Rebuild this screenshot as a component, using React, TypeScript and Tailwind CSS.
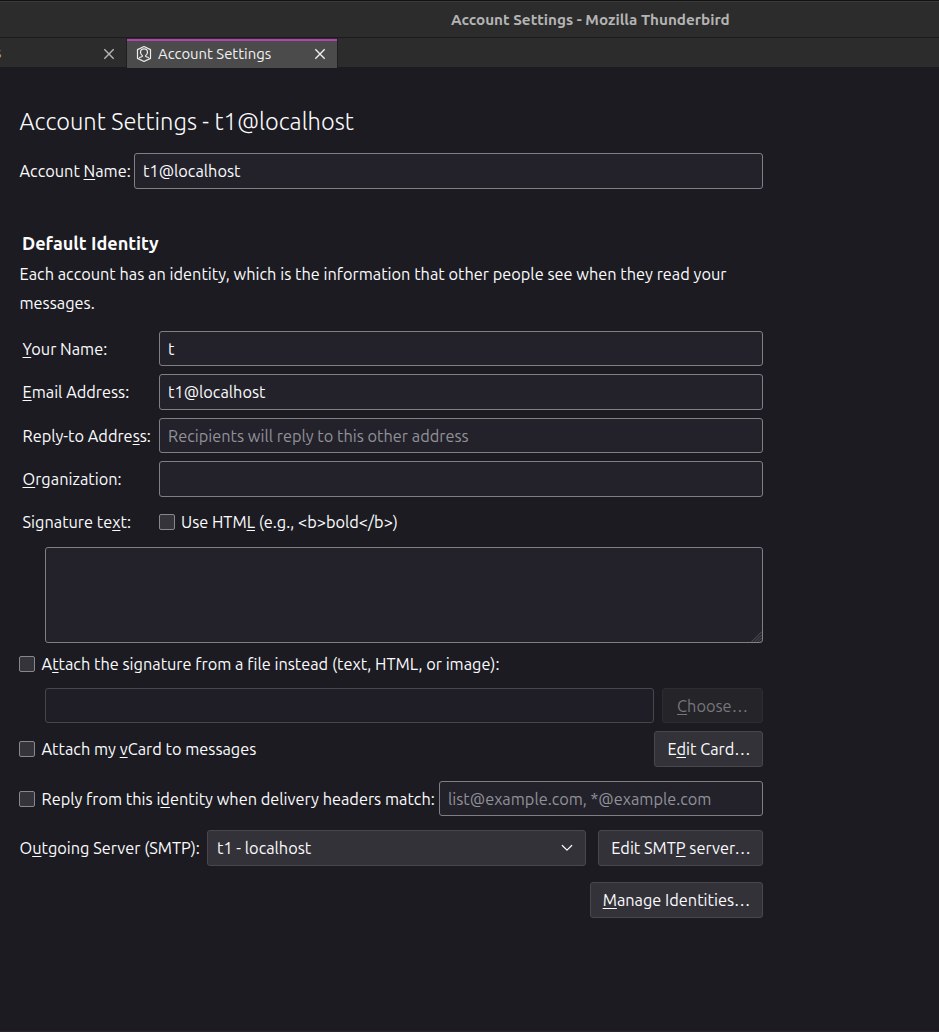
import React from "react";
import clsx from "clsx";

/** Label text with one access key letter underlined. */
function Keyed({ text, at }: { text: string; at: number }) {
  return (
    <>
      {text.slice(0, at)}
      <span className="underline decoration-1 underline-offset-2 [text-decoration-skip-ink:none]">
        {text[at]}
      </span>
      {text.slice(at + 1)}
    </>
  );
}

function Field({
  className,
  value,
  placeholder,
  disabled,
}: {
  className?: string;
  value?: string;
  placeholder?: string;
  disabled?: boolean;
}) {
  return (
    <input
      type="text"
      defaultValue={value}
      placeholder={placeholder}
      disabled={disabled}
      className={clsx(
        "min-w-0 rounded-[3px] border px-2 outline-none placeholder:text-[#919197]",
        disabled ? "border-[#47464c] bg-[#1f1e26]" : "border-[#807f84] bg-[#23222b]",
        className,
      )}
    />
  );
}

function Check() {
  return (
    <input
      type="checkbox"
      className="size-4 shrink-0 appearance-none rounded-[2px] border border-[#88878c] bg-[#35343a]"
    />
  );
}

function Button({
  text,
  at,
  disabled,
  className,
}: {
  text: string;
  at: number;
  disabled?: boolean;
  className: string;
}) {
  return (
    <button
      disabled={disabled}
      className={clsx(
        "flex shrink-0 items-center justify-center rounded-[3px] border",
        disabled ? "border-[#2d2c32] bg-[#252429] text-[#77767b]" : "border-[#48474c] bg-[#333238]",
        className,
      )}
    >
      <span>
        <Keyed text={text} at={at} />
      </span>
    </button>
  );
}

function CloseIcon({ className }: { className: string }) {
  return (
    <svg viewBox="0 0 12 12" className={clsx("size-3 shrink-0", className)} fill="none" stroke="currentColor" strokeWidth="1.4">
      <path d="M1.3 1.3l9.4 9.4M10.7 1.3l-9.4 9.4" />
    </svg>
  );
}

function AccountIcon() {
  return (
    <svg viewBox="0 0 16 18" className="h-[18px] w-4 shrink-0" fill="none" stroke="#ededed" strokeWidth="1.2" strokeLinejoin="round">
      <path d="M8 1.500l6.500 3.100v8.800L8 16.500l-6.500-3.100V4.600z" />
      <path d="M3.500 13.300v-.5c0-1 3-.6 3-1.800 0-.6-.7-.8-1.200-1.500-.5-.7-.8-1.400-.8-2.300 0-2 1.500-3.300 3.500-3.300s3.500 1.300 3.500 3.300c0 .9-.3 1.600-.8 2.300-.5.7-1.200.9-1.200 1.500 0 1.200 3 .8 3 1.800v.5" />
    </svg>
  );
}

export default function App() {
  return (
    <div className="flex h-[1032px] w-[939px] flex-col overflow-hidden border-b border-[#2b2429] bg-[#1c1b21] font-['Ubuntu','Noto_Sans',sans-serif] text-[16.33px] leading-[22px] text-[#fbfbfe]">
      <header className="flex h-[38px] shrink-0 items-center border-t border-b border-t-[#111111] border-b-[#1b1b1b] bg-[#2c2c2c]">
        <div className="flex h-full w-full items-center border-t border-[#3a3a3a] pl-[451px]">
          <span className="text-[15.25px] font-bold text-[#b4b4b4]">Account Settings - Mozilla Thunderbird</span>
        </div>
      </header>

      <nav className="flex h-[29px] shrink-0 bg-[#2c2c2c] text-[14.88px]">
        <div className="flex w-[127px] shrink-0 items-center justify-between border-r border-[#1f1f1f] pr-[11px]">
          <span className="-ml-[5px] text-[#a8a8a8]">s</span>
          <CloseIcon className="mt-0.5 text-[#b5b5b5]" />
        </div>
        <div className="mt-px flex h-[29px] w-[210px] shrink-0 items-center border-t-2 border-[#b343b0] bg-[#4b4b4b] pr-[11px] pb-[2px] pl-[9px]">
          <AccountIcon />
          <span className="ml-[6px] flex-1 text-[#f2f2f2]">Account Settings</span>
          <CloseIcon className="text-[#ececec]" />
        </div>
        <div className="w-px bg-[#1f1f1f]" />
      </nav>

      <main className="flex w-[763px] flex-col">
        <h1 className="mt-[38px] ml-[19.5px] h-8 text-[23.65px] leading-8 font-light whitespace-nowrap">
          Account Settings - t1@localhost
        </h1>

        <div className="mt-4 flex h-9 items-center pl-[19.5px]">
          <span className="w-[114.5px] shrink-0">
            <Keyed text="Account Name:" at={8} />
          </span>
          <Field value="t1@localhost" className="h-9 flex-1" />
        </div>

        <h2 className="mt-[42px] ml-[22px] h-6 text-[18.1px] leading-6 font-bold">Default Identity</h2>
        <p className="mt-[5px] ml-[19.5px] h-[58px] leading-[29px] whitespace-nowrap">
          Each account has an identity, which is the information that other people see when they read your
          <br />
          messages.
        </p>

        <div className="mt-[13px] flex h-[35px] items-center pl-[22.5px]">
          <span className="w-[136.5px] shrink-0">
            <Keyed text="Your Name:" at={0} />
          </span>
          <Field value="t" className="h-[35px] flex-1" />
        </div>
        <div className="mt-2 flex h-9 items-center pl-[22.5px]">
          <span className="w-[136.5px] shrink-0">
            <Keyed text="Email Address:" at={0} />
          </span>
          <Field value="t1@localhost" className="h-9 flex-1" />
        </div>
        <div className="mt-2 flex h-[35px] items-center pl-[22.5px]">
          <span className="w-[136.5px] shrink-0">
            <Keyed text="Reply-to Address:" at={14} />
          </span>
          <Field placeholder="Recipients will reply to this other address" className="h-[35px] flex-1" />
        </div>
        <div className="mt-2 flex h-9 items-center pl-[22.5px]">
          <span className="w-[136.5px] shrink-0">
            <Keyed text="Organization:" at={0} />
          </span>
          <Field className="h-9 flex-1" />
        </div>
        <div className="mt-3.5 flex h-[22px] items-center pl-[22.5px]">
          <span className="w-[136.5px] shrink-0">
            <Keyed text="Signature text:" at={12} />
          </span>
          <Check />
          <span className="ml-1.5">
            <Keyed text="Use HTML (e.g., <b>bold</b>)" at={7} />
          </span>
        </div>

        <div className="relative mt-3.5 ml-[45px] h-24 rounded-[3px] border border-[#807f84] bg-[#23222b]">
          <textarea className="block size-full resize-none bg-transparent p-2 outline-none" />
          <svg viewBox="0 0 11 11" className="absolute right-0 bottom-0 size-[11px]" stroke="#66656b" strokeWidth="0.8">
            <path d="M0.5 11L11 0.5M3.5 11L11 3.5M6.5 11L11 6.5M9.5 11L11 9.5" />
          </svg>
        </div>

        <div className="mt-2.5 flex h-[22px] items-center pl-[19px]">
          <Check />
          <span className="ml-[6.5px]">
            <Keyed text="Attach the signature from a file instead (text, HTML, or image):" at={1} />
          </span>
        </div>

        <div className="mt-[13px] flex h-[35px] gap-2 pl-[45px]">
          <Field disabled className="flex-1" />
          <Button disabled text="Choose…" at={0} className="w-[101px]" />
        </div>

        <div className="mt-2 flex h-9 items-center pl-[19px]">
          <Check />
          <span className="ml-[6.5px] flex-1">
            <Keyed text="Attach my vCard to messages" at={10} />
          </span>
          <Button text="Edit Card…" at={1} className="h-9 w-[109px] pl-px" />
        </div>

        <div className="mt-3.5 flex h-[35px] items-center pl-[19px]">
          <Check />
          <span className="ml-[6.5px] w-[397.5px] shrink-0">
            <Keyed text="Reply from this identity when delivery headers match:" at={17} />
          </span>
          <Field placeholder="list@example.com, *@example.com" className="h-[35px] flex-1" />
        </div>

        <div className="mt-3.5 flex h-9 items-center pl-[19.5px]">
          <span className="w-[187.5px] shrink-0">
            <Keyed text="Outgoing Server (SMTP):" at={1} />
          </span>
          <button className="mr-3 flex h-9 flex-1 items-center justify-between rounded-[3px] border border-[#48474c] bg-[#333238] pr-3 pl-[9px]">
            <span>t1 - localhost</span>
            <svg viewBox="0 0 12 8" className="h-2 w-3" fill="none" stroke="#fbfbfe" strokeWidth="1.2" strokeLinecap="round" strokeLinejoin="round">
              <path d="M1.3 1.5L6 6.2l4.7-4.7" />
            </svg>
          </button>
          <Button text="Edit SMTP server…" at={8} className="h-9 w-[165px] pl-px" />
        </div>

        <div className="mt-4 flex justify-end">
          <Button text="Manage Identities…" at={0} className="h-9 w-[173px]" />
        </div>
      </main>
    </div>
  );
}
